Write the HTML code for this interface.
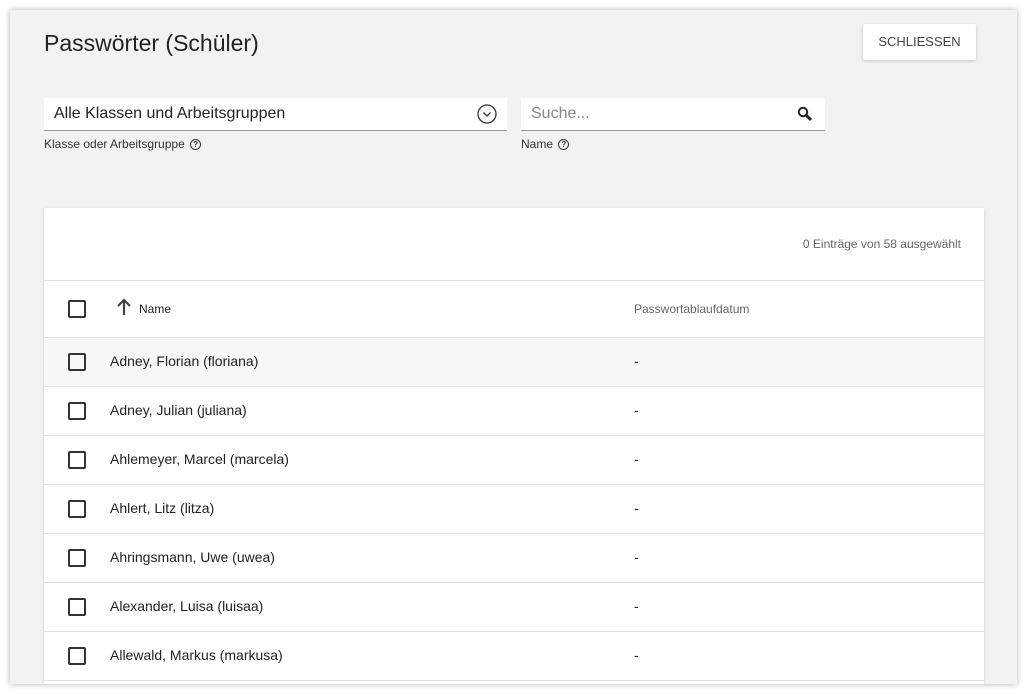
<!DOCTYPE html>
<html><head><meta charset="utf-8"><style>
*{box-sizing:border-box;margin:0;padding:0}
html,body{width:1027px;height:694px;overflow:hidden}
body{background:#fff;font-family:"Liberation Sans",sans-serif;position:relative}
.panel{position:absolute;left:10px;top:10px;width:1007px;height:674px;background:#f2f2f2;box-shadow:0 0 6px rgba(0,0,0,.3);overflow:hidden}
h1{position:absolute;left:44px;top:30px;font-size:23px;font-weight:normal;color:#222}
.btn{position:absolute;left:863px;top:24px;width:113px;height:36px;background:#fff;border-radius:2px;box-shadow:0 1px 3px rgba(0,0,0,.2);font-size:13px;color:#444;text-align:center;line-height:36px}
.sel{position:absolute;left:44px;top:98px;width:463px;height:33px;background:#fff;border-bottom:1px solid #999;font-size:16px;color:#222;padding:7px 10px}
.srch{position:absolute;left:521px;top:98px;width:304px;height:33px;background:#fff;border-bottom:1px solid #999;font-size:16px;color:#888;padding:7px 10px}
.lbl{position:absolute;top:137px;font-size:12px;color:#333}
.q{display:inline-block;width:11px;height:11px;border:1px solid #333;border-radius:50%;font-size:8px;text-align:center;line-height:9px;vertical-align:1px;margin-left:2px;font-weight:bold}
.card{position:absolute;left:34px;top:198px;width:940px;height:476px;background:#fff;box-shadow:0 1px 3px rgba(0,0,0,.15);overflow:hidden}
.cnt{position:absolute;right:23px;top:29px;font-size:12px;color:#666}
.row{position:absolute;left:0;width:940px;height:49px;border-top:1px solid #e0e0e0;font-size:14px;color:#222}
.cb{position:absolute;left:24px;width:18px;height:18px;border:2px solid #333;border-radius:2px;top:15px}
.n{position:absolute;left:66px;top:15px}
.d{position:absolute;left:590px;top:15px}
</style></head><body>
<div class="panel">
<div class="card">
<div class="cnt">0 Einträge von 58 ausgewählt</div>
<div class="row" style="top:72px;height:57px"><div class="cb" style="top:19px"></div>
<svg style="position:absolute;left:72px;top:17px" width="16" height="18" viewBox="0 0 16 18"><path d="M8 2V17M2 8 8 2 14 8" fill="none" stroke="#444" stroke-width="2.2"/></svg>
<span style="position:absolute;left:95px;top:21px;font-size:12px">Name</span>
<span style="position:absolute;left:590px;top:21px;font-size:12px;color:#666">Passwortablaufdatum</span></div>
<div class="row" style="top:129px;background:#f7f7f7"><div class="cb"></div><span class="n">Adney, Florian (floriana)</span><span class="d">-</span></div>
<div class="row" style="top:178px"><div class="cb"></div><span class="n">Adney, Julian (juliana)</span><span class="d">-</span></div>
<div class="row" style="top:227px"><div class="cb"></div><span class="n">Ahlemeyer, Marcel (marcela)</span><span class="d">-</span></div>
<div class="row" style="top:276px"><div class="cb"></div><span class="n">Ahlert, Litz (litza)</span><span class="d">-</span></div>
<div class="row" style="top:325px"><div class="cb"></div><span class="n">Ahringsmann, Uwe (uwea)</span><span class="d">-</span></div>
<div class="row" style="top:374px"><div class="cb"></div><span class="n">Alexander, Luisa (luisaa)</span><span class="d">-</span></div>
<div class="row" style="top:423px"><div class="cb"></div><span class="n">Allewald, Markus (markusa)</span><span class="d">-</span></div>
<div class="row" style="top:472px;height:4px"></div>
</div>
</div>
<h1>Passwörter (Schüler)</h1>
<div class="btn">SCHLIESSEN</div>
<div class="sel">Alle Klassen und Arbeitsgruppen
<svg style="position:absolute;right:10px;top:6px" width="20" height="20" viewBox="0 0 20 20"><circle cx="10" cy="10" r="9" fill="none" stroke="#333" stroke-width="1.3"/><path d="M6.5 8.5 10 12 13.5 8.5" fill="none" stroke="#333" stroke-width="1.3"/></svg></div>
<div class="srch">Suche...
<svg style="position:absolute;right:12px;top:8px" width="16" height="16" viewBox="0 0 16 16"><circle cx="6" cy="6" r="4.2" fill="none" stroke="#222" stroke-width="2"/><path d="M9 9 14 14" stroke="#222" stroke-width="3"/></svg></div>
<div class="lbl" style="left:44px">Klasse oder Arbeitsgruppe <span class="q">?</span></div>
<div class="lbl" style="left:521px">Name <span class="q">?</span></div>
</body></html>
